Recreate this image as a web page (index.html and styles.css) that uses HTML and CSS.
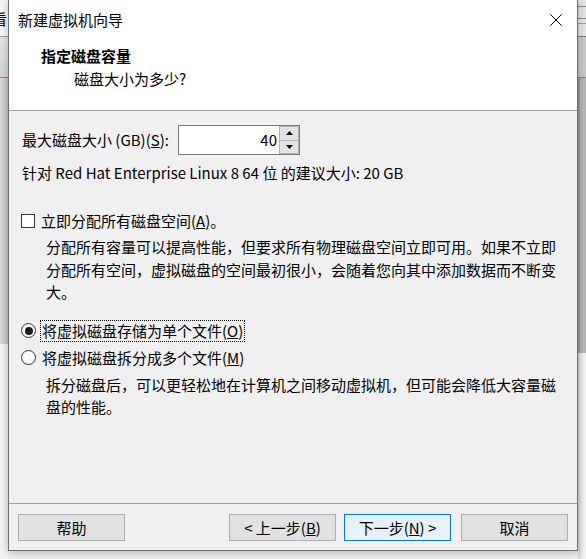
FILE: index.html
```html
<!DOCTYPE html>
<html lang="zh-CN">
<head>
<meta charset="utf-8">
<title>新建虚拟机向导</title>
<link rel="stylesheet" href="styles.css">
</head>
<body>
<div class="backdrop">
  <div class="bg-left">
    <div class="bl-top"><span class="bl-char">看</span></div>
    <div class="bl-band"></div>
    <div class="bl-mid"></div>
    <div class="bl-low"></div>
  </div>
  <div class="bg-right">
    <div class="br-top"></div>
    <div class="br-band"></div>
    <div class="br-mid"></div>
    <div class="br-low"></div>
  </div>
</div>

<div class="dialog">
  <div class="titlebar">
    <span class="title">新建虚拟机向导</span>
    <svg class="close" width="12" height="12" viewBox="0 0 12 12"><path d="M0.5 0.5 L11.5 11.5 M11.5 0.5 L0.5 11.5" stroke="#000" stroke-width="1" fill="none"/></svg>
  </div>
  <div class="header">
    <div class="h-title">指定磁盘容量</div>
    <div class="h-sub">磁盘大小为多少?</div>
  </div>
  <div class="content">
    <div class="size-row">
      <span class="size-label">最大磁盘大小 (GB)(<u>S</u>):</span>
      <div class="spin">
        <div class="spin-value">40</div>
        <div class="spin-btns">
          <div class="spin-btn"><svg width="7" height="4" viewBox="0 0 7 4"><path d="M3.5 0 L7 4 L0 4 Z" fill="#000"/></svg></div>
          <div class="spin-btn"><svg width="7" height="4" viewBox="0 0 7 4"><path d="M0 0 L7 0 L3.5 4 Z" fill="#000"/></svg></div>
        </div>
      </div>
    </div>
    <div class="recommend">针对 Red Hat Enterprise Linux 8 64 位 的建议大小: 20 GB</div>
    <div class="option check-row">
      <span class="checkbox"></span>
      <span class="opt-label">立即分配所有磁盘空间(<u>A</u>)。</span>
    </div>
    <div class="desc desc-1">分配所有容量可以提高性能，但要求所有物理磁盘空间立即可用。如果不立即分配所有空间，虚拟磁盘的空间最初很小，会随着您向其中添加数据而不断变大。</div>
    <div class="option radio-row first">
      <span class="radio checked"></span>
      <span class="opt-label focus">将虚拟磁盘存储为单个文件(<u>O</u>)</span>
    </div>
    <div class="option radio-row second">
      <span class="radio"></span>
      <span class="opt-label">将虚拟磁盘拆分成多个文件(<u>M</u>)</span>
    </div>
    <div class="desc desc-2">拆分磁盘后，可以更轻松地在计算机之间移动虚拟机，但可能会降低大容量磁盘的性能。</div>
  </div>
  <div class="footer">
    <button class="btn">帮助</button>
    <div class="spacer"></div>
    <button class="btn">&lt; 上一步(<u>B</u>)</button>
    <button class="btn primary">下一步(<u>N</u>) &gt;</button>
    <button class="btn cancel">取消</button>
  </div>
</div>
</body>
</html>
```

FILE: styles.css
```css
* { box-sizing: border-box; }

html, body {
  margin: 0;
  padding: 0;
}

body {
  width: 586px;
  height: 559px;
  overflow: hidden;
  position: relative;
  background: #f0f0f0;
  font-family: "Noto Sans CJK SC", "Noto Sans", sans-serif;
  font-size: 15px;
  color: #000;
}

/* background windows behind the dialog */
.backdrop {
  position: absolute;
  inset: 0;
}

.bg-left {
  position: absolute;
  left: 0;
  top: 0;
  width: 8px;
  height: 559px;
  display: flex;
  flex-direction: column;
  overflow: hidden;
}

.bl-top {
  height: 37px;
  background: #f7f7f7;
  border-bottom: 1px solid #9a9a9a;
  position: relative;
  overflow: hidden;
}

.bl-char {
  position: absolute;
  left: -8px;
  top: 8px;
  line-height: 22px;
  font-size: 15px;
}

.bl-band {
  height: 41px;
  background: linear-gradient(#e6e6e6, #d4d4d4);
  border-bottom: 1px solid #4a90d0;
}

.bl-mid {
  height: 266px;
  background: linear-gradient(90deg, #dcdcdc, #c4c4c4);
}

.bl-low {
  flex: 1;
  background: #f3f3f3;
}

.bg-right {
  position: absolute;
  left: 578px;
  top: 0;
  width: 8px;
  height: 559px;
  display: flex;
  flex-direction: column;
}

.br-top {
  height: 37px;
  background:
    linear-gradient(#8a8a8a, #8a8a8a) 0 6px / 100% 1px no-repeat,
    linear-gradient(#8a8a8a, #8a8a8a) 0 18px / 100% 1px no-repeat,
    linear-gradient(#9a9a9a, #9a9a9a) 0 23px / 100% 1px no-repeat,
    #e4e4e4;
  border-bottom: 1px solid #707070;
}

.br-band {
  height: 41px;
  background: #c8c8c8;
  border-bottom: 1px solid #4a90d0;
}

.br-mid {
  height: 275px;
  background: linear-gradient(90deg, #8c8c8c, #b4b4b4 3px, #b8b8b8);
}

.br-low {
  flex: 1;
  background: linear-gradient(90deg, #d0d0d0, #ececec 4px, #f4f4f4);
}

/* dialog */
.dialog {
  position: absolute;
  left: 8px;
  top: -1px;
  width: 570px;
  height: 552px;
  border: 1px solid #6f6f6f;
  background: #f0f0f0;
  display: flex;
  flex-direction: column;
  box-shadow: 0 2px 8px rgba(0, 0, 0, 0.25);
}

.titlebar {
  height: 40px;
  background: #fff;
  display: flex;
  align-items: center;
  padding: 0 15px 0 9px;
}

.title {
  flex: 1;
  line-height: 40px;
}

.close {
  display: block;
}

.header {
  height: 71px;
  background: #fff;
  border-bottom: 1px solid #a0a0a0;
  padding: 5px 0 0 32px;
  line-height: 22px;
}

.h-title {
  font-weight: bold;
}

.h-sub {
  margin-top: 1px;
  padding-left: 33px;
}

.content {
  flex: 1;
  padding: 14px 0 0 12px;
}

.size-row {
  display: flex;
  align-items: center;
  height: 30px;
}

.size-label {
  padding-left: 1px;
  line-height: 22px;
  width: 157px;
}

.spin {
  width: 122px;
  height: 30px;
  border: 1px solid #7a7a7a;
  background: #fff;
  display: flex;
}

.spin-value {
  flex: 1;
  text-align: right;
  line-height: 28px;
  padding-right: 2px;
}

.spin-btns {
  width: 20px;
  display: flex;
  flex-direction: column;
}

.spin-btn {
  flex: 1;
  background: #e3e3e3;
  border: 1px solid #b5b5b5;
  display: flex;
  align-items: center;
  justify-content: center;
}

.spin-btn + .spin-btn {
  border-top: none;
}

.recommend {
  margin-top: 7px;
  line-height: 22px;
  padding-left: 1px;
}

.option {
  display: flex;
  align-items: center;
  height: 22px;
}

.check-row {
  margin-top: 26px;
}

.checkbox {
  width: 14px;
  height: 14px;
  border: 1px solid #333;
  background: #fff;
  flex: none;
}

.opt-label {
  margin-left: 6px;
  line-height: 20px;
}

.desc {
  padding-left: 25px;
  padding-right: 14px;
  line-height: 22.5px;
}

.desc-1 {
  margin-top: 4px;
}

.radio-row.first {
  margin-top: 16px;
}

.radio-row.second {
  margin-top: 5px;
}

.radio {
  width: 15px;
  height: 15px;
  border: 1px solid #333;
  border-radius: 50%;
  background: #fff;
  flex: none;
  display: flex;
  align-items: center;
  justify-content: center;
}

.radio.checked::after {
  content: "";
  width: 8px;
  height: 8px;
  border-radius: 50%;
  background: #1a1a1a;
}

.opt-label.focus {
  margin-left: 5px;
  padding: 0 1px;
  outline: 1px dotted #000;
}

.desc-2 {
  margin-top: 5px;
}

.footer {
  height: 47px;
  border-top: 1px solid #a0a0a0;
  display: flex;
  align-items: flex-start;
  padding: 10px 9px 0 9px;
}

.spacer {
  flex: 1;
}

.btn {
  width: 107px;
  height: 27px;
  border: 1px solid #adadad;
  background: #e1e1e1;
  font-family: inherit;
  font-size: 15px;
  line-height: 23px;
  padding: 0;
  color: #000;
}

.btn.primary {
  margin-left: 8px;
  background: #e5f1fb;
  border-color: #0078d7;
}

.btn.cancel {
  margin-left: 10px;
}
```
